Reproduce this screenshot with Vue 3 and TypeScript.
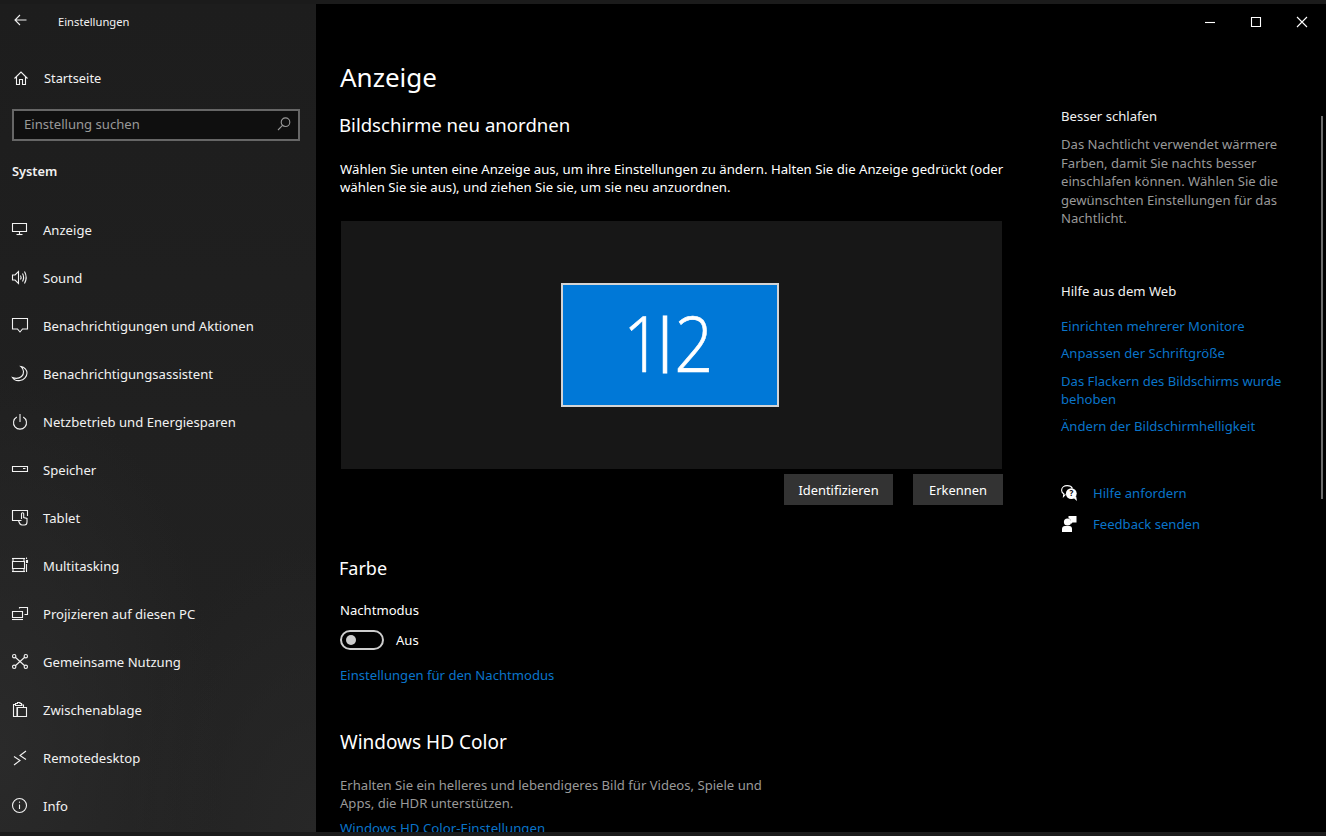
<script setup lang="ts">
interface NavItem { label: string; paths: string[]; circle?: number[][] }
const nav: NavItem[] = [
  { label: 'Anzeige', paths: ['M.5 1.5H14.5V9.5H.5Z', 'M7.5 9.5V12', 'M4.5 12.5H10.5'] },
  { label: 'Sound', paths: ['M.5 5H3L6.5 1.5V13.5L3 10H.5Z', 'M8.5 5.5Q9.7 7.5 8.5 9.5', 'M10.5 3.5Q12.7 7.5 10.5 11.5', 'M12.5 1.5Q15.8 7.5 12.5 13.5'] },
  { label: 'Benachrichtigungen und Aktionen', paths: ['M.5 .5H15.5V11H10.5L8 14L5.5 11H.5Z'] },
  { label: 'Benachrichtigungsassistent', paths: ['M9 .5C12 3 12.5 8 9.5 10.5C7 12.5 3 12.5 .5 11.5C2 14 5 15 8 14.5C12 14 15 10.5 15 7C15 4 12.5 1 9 .5Z'] },
  { label: 'Netzbetrieb und Energiesparen', paths: ['M4.8 3A6.5 6.5 0 1 0 11.2 3', 'M8 0V8'] },
  { label: 'Speicher', paths: ['M.5 4.5H15.5V9.5H.5Z', 'M11 6.5H13.5'] },
  { label: 'Tablet', paths: ['M6.5 10.5H.5V.5H15.5V6', 'M9.5 9V3.8A1.1 1.1 0 0 1 11.7 3.8V7.5L15 8.5V12C15 14 14 15 12.5 15H10C8.5 15 7.2 13 6.5 10.5L9.5 10.5'] },
  { label: 'Multitasking', paths: ['M0 .5H13', 'M1 .5V3', 'M12 .5V3', 'M.5 3.5H12.5V10.5H.5Z', 'M1 11V13.5', 'M12 11V13.5', 'M0 13.5H13', 'M14.5 -.5V1', 'M14.5 2.5H15.5V4.5H14.5Z', 'M14.5 6V14'] },
  { label: 'Projizieren auf diesen PC', paths: ['M7.5 2.5V1.5H15.5V8.5H12.5', 'M.5 5.5H10.5V11.5H.5Z', 'M0 13.5H11'] },
  { label: 'Gemeinsame Nutzung', paths: ['M3 3L13 12', 'M13 3L3 12'], circle: [[2.2, 2.2], [13.8, 2.2], [2.2, 12.8], [13.8, 12.8]] },
  { label: 'Zwischenablage', paths: ['M5 5V14.5H1.5V2.5H3.5', 'M3.5 3.5V1.5H5.5V.5H8V1.5H9.5V3.5Z', 'M9.5 3H11.5V5', 'M5.5 5.5H14.5V14.5H5.5Z'] },
  { label: 'Remotedesktop', paths: ['M2 6.5L8 10.5L2 15', 'M14 1L8 5.5L14 9.5'] },
  { label: 'Info', paths: ['M7.5 6.5V11', 'M7.5 3.6V4.8'], circle: [[7.5, 7.5, 7]] },
]
const helpLinks = ['Einrichten mehrerer Monitore', 'Anpassen der Schriftgröße']
</script>

<template>
  <div class="window">
    <aside class="sidebar">
      <div class="app-head">
        <svg class="back" viewBox="0 0 13 12" width="13" height="12"><path d="M12.5 6H1M6 1L1 6L6 11" /></svg>
        <span>Einstellungen</span>
      </div>
      <div class="home">
        <svg class="icon" viewBox="0 0 14 14" width="14" height="14"><path d="M.5 7.5L7 1L13.5 7.5M2.5 6V13.5H5.5V8.5H8.5V13.5H11.5V6" /></svg>
        <span>Startseite</span>
      </div>
      <div class="search">
        <span>Einstellung suchen</span>
        <svg class="icon" viewBox="0 0 14 14" width="14" height="14"><circle cx="8.5" cy="5.2" r="4.3" /><path d="M5.5 8.4L1 13" /></svg>
      </div>
      <div class="section">System</div>
      <nav class="nav">
        <div v-for="item in nav" :key="item.label" class="nav-row">
          <svg class="icon" viewBox="0 0 16 16" width="16" height="16">
            <path v-for="d in item.paths" :key="d" :d="d" />
            <circle v-for="c in item.circle ?? []" :key="c.join()" :cx="c[0]" :cy="c[1]" :r="c[2] ?? 1.7" />
          </svg>
          <span>{{ item.label }}</span>
        </div>
      </nav>
    </aside>

    <main class="main">
      <div class="titlebar">
        <div class="ctl"><svg viewBox="0 0 10 10" width="10" height="10"><path d="M0 5.5H10" /></svg></div>
        <div class="ctl"><svg viewBox="0 0 10 10" width="10" height="10"><path d="M.5 .5H9.5V9.5H.5Z" /></svg></div>
        <div class="ctl"><svg viewBox="0 0 10 10" width="10" height="10"><path d="M0 0L10 10M10 0L0 10" /></svg></div>
      </div>
      <div class="body">
        <section class="content">
          <h1>Anzeige</h1>
          <h2 class="arrange">Bildschirme neu anordnen</h2>
          <p class="intro">Wählen Sie unten eine Anzeige aus, um ihre Einstellungen zu ändern. Halten Sie die Anzeige gedrückt (oder<br />wählen Sie sie aus), und ziehen Sie sie, um sie neu anzuordnen.</p>
          <div class="stage">
            <div class="monitor">
              <span class="digits"><span class="one">1</span><span class="pipe">|</span><span>2</span></span>
            </div>
          </div>
          <div class="buttons">
            <button class="btn btn-id">Identifizieren</button>
            <button class="btn btn-detect">Erkennen</button>
          </div>
          <h2 class="farbe">Farbe</h2>
          <div class="night">Nachtmodus</div>
          <div class="toggle-row">
            <span class="toggle"><span class="knob"></span></span>
            <span>Aus</span>
          </div>
          <a class="link night-link">Einstellungen für den Nachtmodus</a>
          <h2 class="hd">Windows HD Color</h2>
          <p class="hd-text">Erhalten Sie ein helleres und lebendigeres Bild für Videos, Spiele und<br />Apps, die HDR unterstützen.</p>
          <a class="link hd-link">Windows HD Color-Einstellungen</a>
        </section>

        <section class="side">
          <div class="side-title first">Besser schlafen</div>
          <p class="side-text">Das Nachtlicht verwendet wärmere<br />Farben, damit Sie nachts besser<br />einschlafen können. Wählen Sie die<br />gewünschten Einstellungen für das<br />Nachtlicht.</p>
          <div class="side-title web">Hilfe aus dem Web</div>
          <a class="link l1">{{ helpLinks[0] }}</a>
          <a class="link l2">{{ helpLinks[1] }}</a>
          <a class="link l3">Das Flackern des Bildschirms wurde<br />behoben</a>
          <a class="link l4">Ändern der Bildschirmhelligkeit</a>
          <div class="help-row r1">
            <svg viewBox="0 0 16 16" width="16" height="16">
              <path d="M4.5 9.4L2.5 11.5L2.8 8.8C1.4 8 .6 6.7 .6 5.2C.6 2.6 3 .6 6.2 .6C8.6 .6 10.7 1.8 11.5 3.4" />
              <circle class="fill" cx="10.3" cy="8.6" r="5.4" />
              <path class="fill" d="M12.5 13L16 16L15.2 11.5Z" />
              <text x="10.3" y="11.4" class="q">?</text>
            </svg>
            <a class="link">Hilfe anfordern</a>
          </div>
          <div class="help-row r2">
            <svg viewBox="0 0 16 16" width="16" height="16">
              <circle class="fill" cx="6.5" cy="6" r="3.6" />
              <path class="fill" d="M1 16V13C1 11.2 2.4 10 3.8 10H8.5C10 10 11 11.2 11 13V16Z" />
              <path class="fill" d="M7.5 0H15.5V6.5H11.5L10 8V6C10 4 9 2.6 7.5 2.2Z" />
            </svg>
            <a class="link">Feedback senden</a>
          </div>
        </section>
      </div>
      <div class="thumb"></div>
    </main>
  </div>
</template>

<style>
html, body { margin: 0; background: #1b1b1b; overflow: hidden; }
</style>

<style scoped>
.window {
  width: 1326px; height: 836px; box-sizing: border-box; padding: 4px 0;
  display: flex; overflow: hidden; background: #1b1b1b; color: #fff;
  font-family: "Noto Sans", "Open Sans", sans-serif; font-size: 13.1px;
}
svg { display: block; overflow: visible; flex: none; }
svg path, svg circle { fill: none; stroke: currentColor; stroke-width: 1.1; }
svg .fill { fill: #fff; stroke: none; }
svg .q { fill: #000; font-size: 8px; font-weight: 700; text-anchor: middle; }

.sidebar {
  width: 316px; flex: none;
  background:
    radial-gradient(ellipse 70% 45% at 0% 90%, #2a2a2a 0%, rgba(42, 42, 42, 0) 100%),
    radial-gradient(ellipse 60% 35% at 100% 100%, #272727 0%, rgba(39, 39, 39, 0) 100%),
    linear-gradient(180deg, #1d1d1d 0%, #202020 50%, #222 100%);
  display: flex; flex-direction: column; color: #f2f2f2;
}
.app-head { height: 36px; box-sizing: border-box; padding: 0 0 1px 14px; display: flex; align-items: center; font-size: 11.2px; }
.app-head span { margin-left: 31px; }
.back { margin-bottom: 3px; }
.home { height: 48px; margin-top: 14px; display: flex; align-items: center; padding-left: 14px; gap: 16px; font-size: 12.8px; }
.search {
  margin: 7px 16px 0 12px; height: 32px; box-sizing: border-box; border: 2px solid #666;
  background: #0f0f0f; color: #999; display: flex; align-items: center; justify-content: space-between;
  padding: 0 7px 2px 10px;
}
.section { margin: 18px 0 0 12px; height: 24px; line-height: 24px; font-weight: 600; font-size: 12.8px; }
.nav { margin-top: 23px; }
.nav-row { height: 48px; display: flex; align-items: center; padding-left: 12px; gap: 15px; }

.main { flex: 1; background: #000; position: relative; overflow: hidden; display: flex; flex-direction: column; }
.titlebar { height: 36px; flex: none; display: flex; justify-content: flex-end; padding-right: 1px; }
.ctl { width: 46px; display: flex; align-items: center; justify-content: center; }
.body { display: flex; flex: 1; min-height: 0; }
.content { width: 663px; margin-left: 24px; flex: none; }
h1, h2, p { margin: 0; font-weight: 400; }
h1 { font-size: 26px; line-height: 38px; margin-top: 18px; }
h2 { font-size: 18.6px; line-height: 28px; }
.arrange { margin-top: 15px; margin-left: -1px; }
.intro { line-height: 18px; margin-top: 21px; font-size: 13.18px; white-space: nowrap; }
.stage {
  margin: 25px 0 0 1px; width: 661px; height: 248px; background: #171717;
  display: flex; align-items: center; justify-content: center; padding-right: 4px; box-sizing: border-box;
}
.monitor {
  width: 218px; height: 124px; box-sizing: border-box; border: 2px solid #d4d4d4; background: #0078d7;
  display: flex; align-items: center; justify-content: center;
}
.digits {
  font-family: "Open Sans", sans-serif; font-weight: 300; font-size: 78px; line-height: 90px;
  display: flex; align-items: center; margin: 0 6px 7px 0; letter-spacing: -3px;
  -webkit-text-stroke: 0.6px #fff; transform: scaleX(0.88);
}
.one { letter-spacing: -12px; }
.pipe { font-size: 56px; line-height: 56px; font-weight: 400; margin: 0 0 9.6px 0; letter-spacing: -5px; -webkit-text-stroke: 1.2px #fff; }
.buttons { margin-top: 5px; display: flex; justify-content: flex-end; gap: 20px; }
.btn { height: 31px; border: 0; background: #333; color: #fff; font: inherit; font-size: 12.9px; padding: 0; }
.btn-id { width: 109px; }
.btn-detect { width: 90px; }
.farbe { margin-top: 49px; margin-left: -1px; font-size: 18px; }
.night { line-height: 20px; margin-top: 18px; }
.toggle-row { margin-top: 10px; height: 20px; display: flex; align-items: center; gap: 12px; }
.toggle {
  width: 44px; height: 20px; box-sizing: border-box; border: 2px solid #ccc; border-radius: 10px;
  display: flex; align-items: center; padding-left: 4px;
}
.knob { width: 10px; height: 10px; border-radius: 50%; background: #ccc; }
.link { display: block; color: #0a74c9; line-height: 20px; }
.night-link { margin-top: 15px; }
.hd { margin-top: 43px; font-size: 19px; }
.hd-text { margin-top: 20px; line-height: 18px; color: #999; }
.hd-link { margin-top: 6px; font-size: 13.25px; }

.side { margin-left: 58px; width: 240px; }
.side-title { line-height: 20px; color: #f2f2f2; }
.first { margin-top: 66px; }
.side-text { margin-top: 9px; line-height: 18.5px; color: #999; }
.web { margin-top: 53.5px; }
.l1 { margin-top: 15px; }
.l2 { margin-top: 7px; }
.l3 { margin-top: 9px; line-height: 18px; }
.l4 { margin-top: 8px; }
.help-row { display: flex; align-items: center; gap: 16px; height: 20px; }
.r1 { margin-top: 47px; }
.r2 { margin-top: 11px; }

.thumb { position: absolute; right: 3px; top: 112px; width: 2px; height: 383px; background: #6b6b6b; }
</style>
